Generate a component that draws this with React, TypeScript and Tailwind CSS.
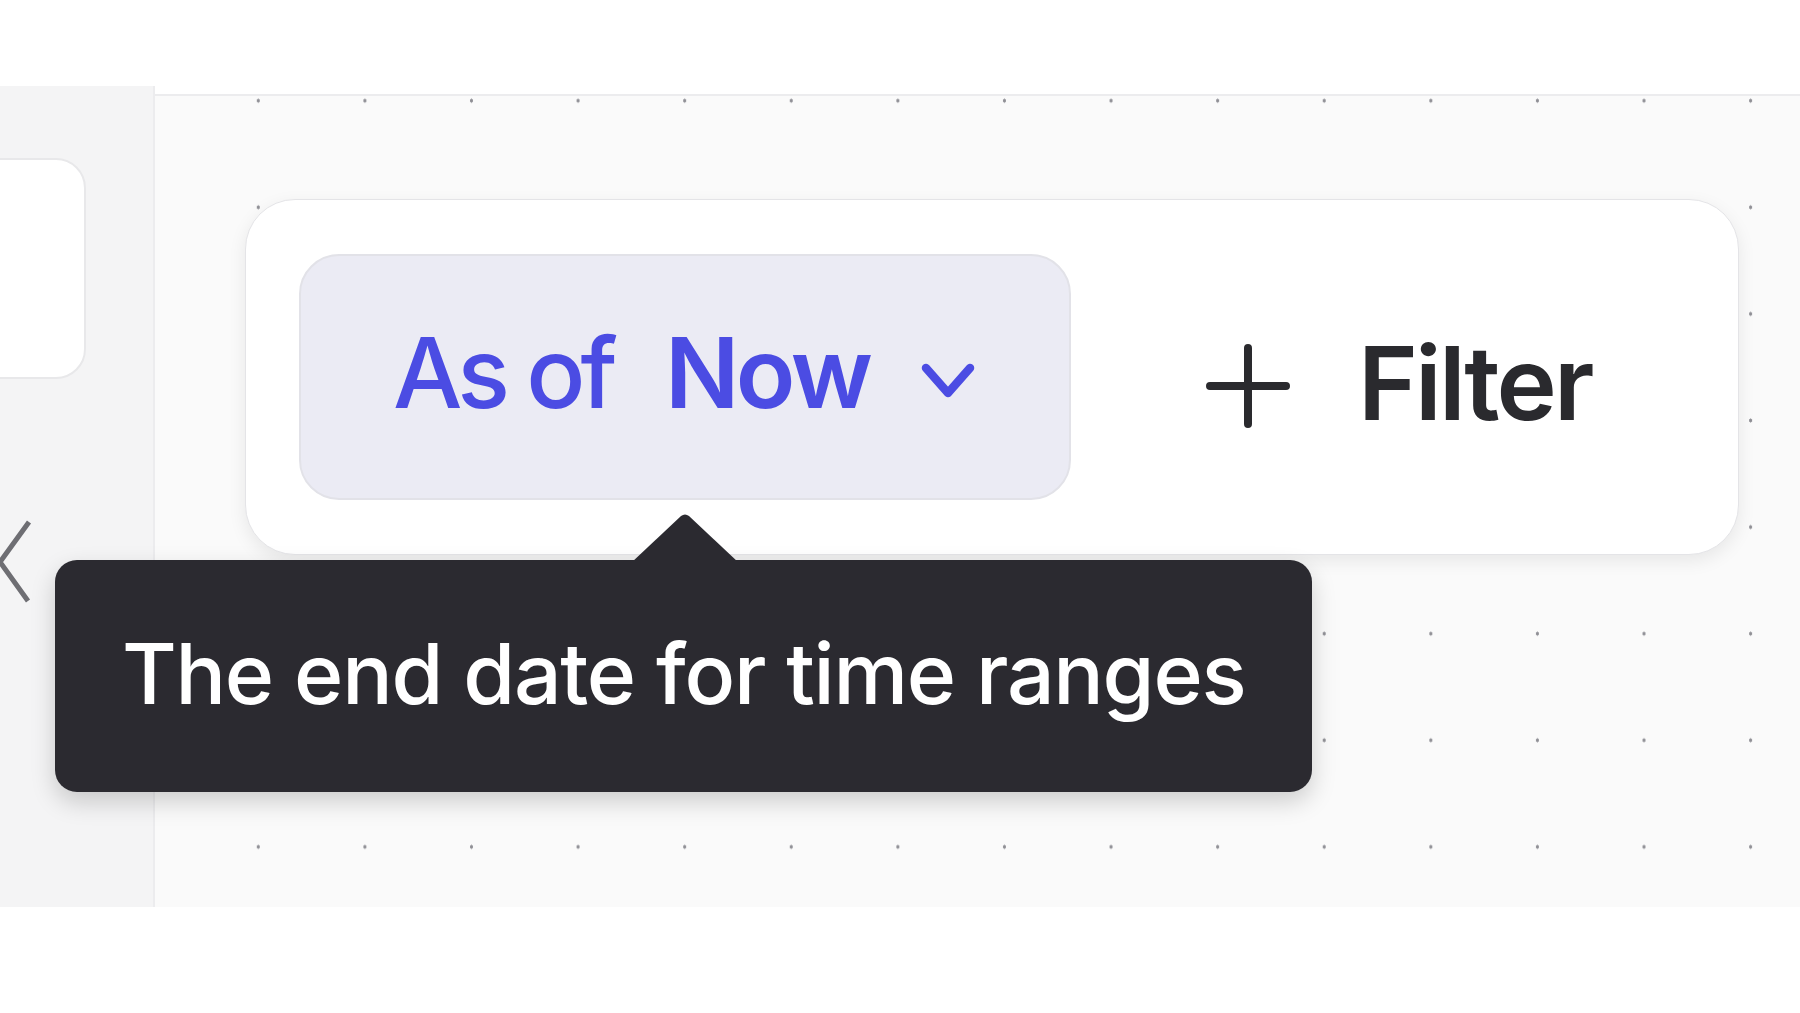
const font = { fontFamily: 'Inter, "Noto Sans", sans-serif' };

function FilterBar() {
  return (
    <div className="flex h-[356px] w-[1494px] items-center rounded-[50px] border border-[#e4e4e7] bg-white pl-[53px] shadow-[0_6px_18px_rgba(0,0,0,0.08)]">
      <button className="flex h-[246px] w-[772px] items-center rounded-[40px] border-2 border-[#e2e2e8] bg-[#ebebf4] pb-[8px] pl-[92px] text-[#4b4ce3]">
        <span className="text-[98px] font-medium leading-none tracking-[-0.05em]">As of</span>
        <span className="ml-[52px] text-[98px] font-semibold leading-none tracking-[-0.035em]">Now</span>
        <svg width="54" height="38" viewBox="0 0 54 38" className="ml-[52px] mt-[16px]">
          <path d="M5 6 L27 31 L49 6" stroke="currentColor" strokeWidth="8.5" fill="none" strokeLinecap="round" strokeLinejoin="round" />
        </svg>
      </button>
      <button className="ml-[135px] mt-[12px] flex items-center text-[#2a2a2e]">
        <svg width="84" height="84" viewBox="0 0 84 84" className="mt-[6px]">
          <path d="M42 4v76M4 42h76" stroke="currentColor" strokeWidth="8" strokeLinecap="round" />
        </svg>
        <span className="ml-[68px] text-[102px] font-semibold leading-none tracking-[-0.028em]">Filter</span>
      </button>
    </div>
  );
}

function Tooltip() {
  return (
    <div className="absolute left-[55px] top-[474px] z-20">
      <svg width="112" height="50" viewBox="0 0 112 50" className="absolute left-[574px] top-[-47px]">
        <path d="M2 50 L52 3 Q56 0 60 3 L110 50 Z" fill="#2b2a30" />
      </svg>
      <div className="flex h-[232px] w-[1257px] items-center rounded-[22px] bg-[#2b2a30] pb-[4px] pl-[67px] shadow-[0_10px_24px_rgba(0,0,0,0.18)]">
        <span className="text-[84px] font-medium leading-none tracking-[-0.015em] text-white">The end date for time ranges</span>
      </div>
    </div>
  );
}

export default function App() {
  return (
    <div className="h-[1013px] w-[1800px] overflow-hidden bg-white" style={font}>
      <div className="h-[86px]" />
      <div className="relative flex h-[821px]">
        <aside className="relative w-[155px] shrink-0 border-r-2 border-[#ececee] bg-[#f4f4f5]">
          <div className="-ml-[30px] mt-[72px] h-[221px] w-[116px] rounded-[30px] border-2 border-[#e8e8ea] bg-white" />
          <svg width="34" height="84" viewBox="0 0 34 84" className="absolute left-0 top-[434px]">
            <path d="M29 2 L0 42 L28 81" stroke="#6e6e73" strokeWidth="5" fill="none" />
          </svg>
        </aside>
        <main className="mt-[8px] flex-1 border-t-2 border-[#ececee] bg-[#fafafa] bg-[radial-gradient(1.6px_2.4px_at_center,#8f8f95_70%,transparent_100%)] pl-[90px] pt-[103px] [background-position:50px_58px] [background-size:106.6px_106.6px]">
          <FilterBar />
        </main>
        <Tooltip />
      </div>
    </div>
  );
}
